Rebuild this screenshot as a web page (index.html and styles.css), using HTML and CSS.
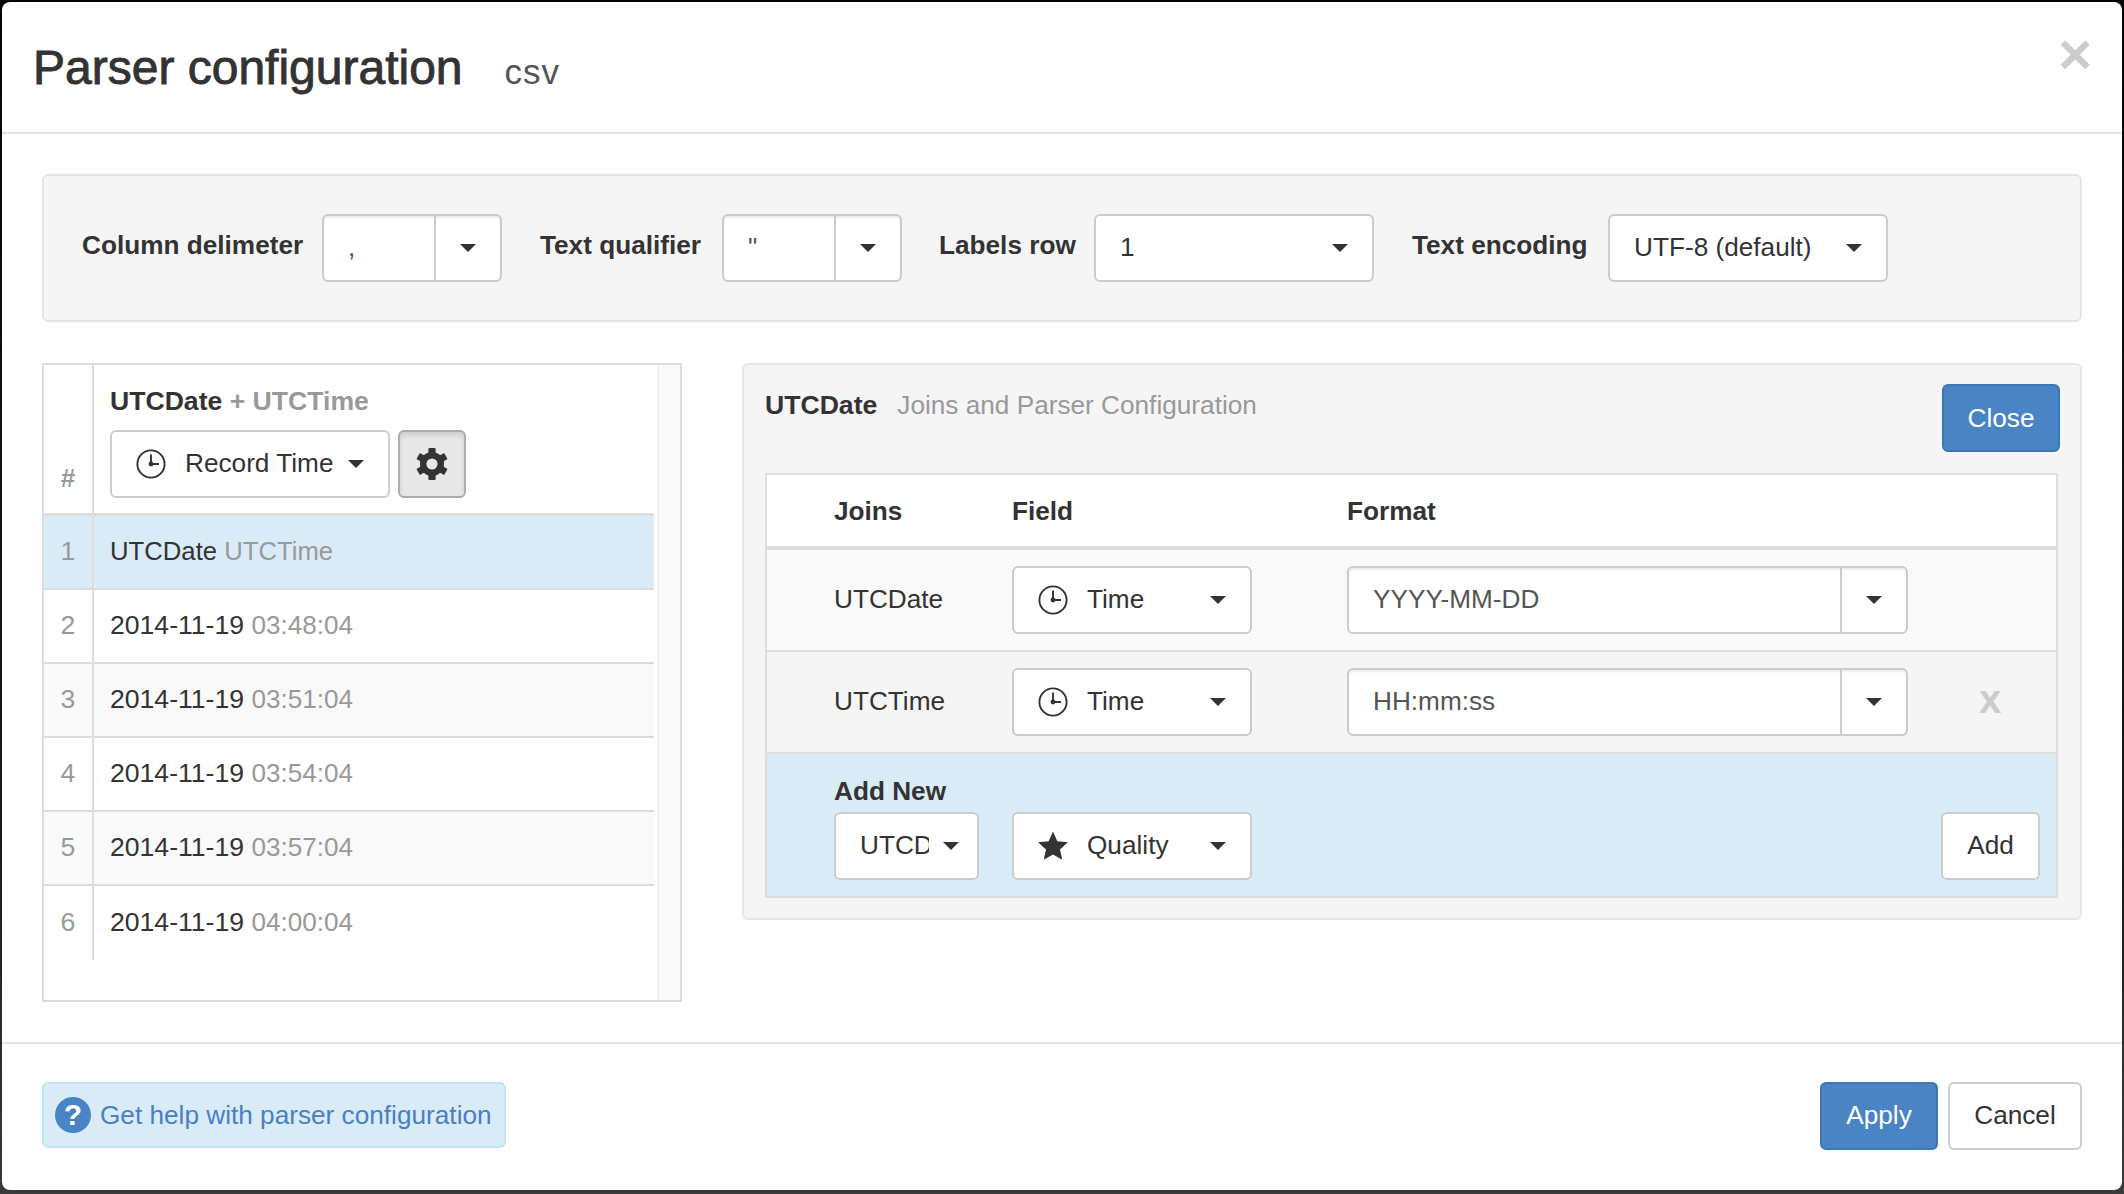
FILE: index.html
```html
<!DOCTYPE html>
<html lang="en">
  <head>
    <meta charset="UTF-8" />
    <title>Parser configuration</title>
    <link rel="stylesheet" href="styles.css">
  </head>
  <body>
    <svg class="defs" width="0" height="0">
      <symbol id="clock" viewBox="0 0 30 30">
        <circle cx="15" cy="15" r="13.6" fill="none" stroke="#333" stroke-width="1.9" />
        <path d="M15 5.5V15H23" fill="none" stroke="#333" stroke-width="1.9" />
        <circle cx="15" cy="15" r="2.4" fill="#333" />
      </symbol>
    </svg>

    <div class="modal">
      <div class="modal-head">
        <h3 class="modal-title">Parser configuration</h3>
        <span class="modal-sub">csv</span>
        <span class="close">&times;</span>
      </div>

      <div class="modal-body">
        <div class="well toolbar">
          <label class="tool-label w-delim">Column delimeter</label>
          <div class="combo w-combo">
            <span class="combo-text">,</span>
            <span class="combo-btn"><i class="caret"></i></span>
          </div>
          <label class="tool-label w-qual">Text qualifier</label>
          <div class="combo w-combo">
            <span class="combo-text">"</span>
            <span class="combo-btn"><i class="caret"></i></span>
          </div>
          <label class="tool-label w-row">Labels row</label>
          <div class="btn select w-select"><span>1</span><i class="caret"></i></div>
          <label class="tool-label w-enc">Text encoding</label>
          <div class="btn select w-select"><span>UTF-8 (default)</span><i class="caret"></i></div>
        </div>

        <div class="panels">
          <div class="preview">
            <table class="preview-table">
              <thead>
                <tr>
                  <th class="num">#</th>
                  <th class="preview-head">
                    <div class="preview-title">UTCDate <span class="muted">+ UTCTime</span></div>
                    <div class="preview-tools">
                      <div class="btn pick w-record">
                        <svg class="ico"><use href="#clock" /></svg>
                        <span>Record Time</span>
                        <i class="caret"></i>
                      </div>
                      <div class="btn gear-btn">
                        <svg class="gear" viewBox="-16 -16 32 32">
                          <g fill="#333">
                            <rect x="-3.6" y="-16" width="7.2" height="32" rx="1" />
                            <rect x="-3.6" y="-16" width="7.2" height="32" rx="1" transform="rotate(60)" />
                            <rect x="-3.6" y="-16" width="7.2" height="32" rx="1" transform="rotate(120)" />
                            <circle r="12" />
                          </g>
                          <circle r="5.6" fill="#e8e8e8" />
                        </svg>
                      </div>
                    </div>
                  </th>
                </tr>
              </thead>
              <tbody>
                <tr class="active"><td class="num">1</td><td class="names">UTCDate <span class="muted">UTCTime</span></td></tr>
                <tr><td class="num">2</td><td>2014-11-19 <span class="muted">03:48:04</span></td></tr>
                <tr class="odd"><td class="num">3</td><td>2014-11-19 <span class="muted">03:51:04</span></td></tr>
                <tr><td class="num">4</td><td>2014-11-19 <span class="muted">03:54:04</span></td></tr>
                <tr class="odd"><td class="num">5</td><td>2014-11-19 <span class="muted">03:57:04</span></td></tr>
                <tr class="last"><td class="num">6</td><td>2014-11-19 <span class="muted">04:00:04</span></td></tr>
              </tbody>
            </table>
            <div class="scroll-strip"></div>
          </div>

          <div class="well editor">
            <div class="editor-head">
              <div class="editor-title"><b>UTCDate</b><span class="muted">Joins and Parser Configuration</span></div>
              <div class="btn btn-primary w-close">Close</div>
            </div>
            <table class="joins">
              <colgroup>
                <col class="col-joins" />
                <col class="col-field" />
                <col class="col-format" />
                <col />
              </colgroup>
              <thead>
                <tr><th class="first">Joins</th><th>Field</th><th>Format</th><th></th></tr>
              </thead>
              <tbody>
                <tr class="odd">
                  <td class="first">UTCDate</td>
                  <td>
                    <div class="btn pick w-time">
                      <svg class="ico"><use href="#clock" /></svg>
                      <span>Time</span>
                      <i class="caret"></i>
                    </div>
                  </td>
                  <td>
                    <div class="combo w-format">
                      <span class="combo-text">YYYY-MM-DD</span>
                      <span class="combo-btn"><i class="caret"></i></span>
                    </div>
                  </td>
                  <td></td>
                </tr>
                <tr>
                  <td class="first">UTCTime</td>
                  <td>
                    <div class="btn pick w-time">
                      <svg class="ico"><use href="#clock" /></svg>
                      <span>Time</span>
                      <i class="caret"></i>
                    </div>
                  </td>
                  <td>
                    <div class="combo w-format">
                      <span class="combo-text">HH:mm:ss</span>
                      <span class="combo-btn"><i class="caret"></i></span>
                    </div>
                  </td>
                  <td><span class="remove">x</span></td>
                </tr>
                <tr class="add-new">
                  <td class="first">
                    <div class="add-label">Add New</div>
                    <div class="btn select w-utcd"><span class="clip">UTCD</span><i class="caret"></i></div>
                  </td>
                  <td>
                    <div class="btn pick w-time">
                      <svg class="ico" viewBox="0 0 30 30"><path d="M15 0.5l4.3 9.7 10.6 1.1-7.9 7.1 2.2 10.4-9.2-5.3-9.2 5.3 2.2-10.4-7.9-7.1 10.6-1.1z" fill="#333" /></svg>
                      <span>Quality</span>
                      <i class="caret"></i>
                    </div>
                  </td>
                  <td></td>
                  <td><div class="btn w-add">Add</div></td>
                </tr>
              </tbody>
            </table>
          </div>
        </div>
      </div>

      <div class="modal-foot">
        <a class="help"><span class="help-ico">?</span>Get help with parser configuration</a>
        <div class="foot-btns">
          <div class="btn btn-primary w-apply">Apply</div>
          <div class="btn w-cancel">Cancel</div>
        </div>
      </div>
    </div>
  </body>
</html>
```

FILE: styles.css
```css
* {
  box-sizing: border-box;
}

body {
  margin: 0;
  height: 1194px;
  overflow: hidden;
  background: linear-gradient(#050505, #1a1a1a 70%, #3a3a3a);
  color: #333;
  font-family: "Liberation Sans", Arial, sans-serif;
  font-size: 26.2px;
  line-height: 38px;
}

.defs {
  position: absolute;
}

.modal {
  position: relative;
  display: flex;
  flex-direction: column;
  margin: 2px 2px 0;
  height: 1188px;
  background: #fff;
  border-radius: 8px;
}

/* header */
.modal-head {
  display: flex;
  align-items: baseline;
  gap: 42px;
  height: 132px;
  padding: 42px 0 0 31px;
  border-bottom: 2px solid #e5e5e5;
}

.modal-title {
  margin: 0;
  font-size: 48px;
  font-weight: normal;
  line-height: 48px;
  -webkit-text-stroke: 0.9px #333;
}

.modal-sub {
  font-size: 35px;
  letter-spacing: 1px;
  line-height: 48px;
  color: #555;
}

.close {
  position: absolute;
  top: 23px;
  right: 30px;
  font-size: 58px;
  font-weight: bold;
  line-height: 58px;
  color: #ccc;
}

.modal-body {
  height: 908px;
  padding: 40px 40px 0;
}

/* shared bits */
.well {
  background: #f5f5f5;
  border: 2px solid #e6e6e6;
  border-radius: 6px;
}

.muted {
  color: #999;
}

.btn {
  display: flex;
  align-items: center;
  justify-content: center;
  height: 68px;
  background: #fff;
  border: 2px solid #ccc;
  border-radius: 6px;
  color: #333;
}

.btn > span {
  margin-bottom: 2px;
}

.btn-primary {
  background: #4a84c4;
  border-color: #3f77b6;
  color: #fff;
}

.caret {
  flex: none;
  width: 0;
  height: 0;
  border-top: 8px solid #333;
  border-left: 8px solid transparent;
  border-right: 8px solid transparent;
}

.combo {
  display: flex;
  flex: none;
  height: 68px;
  background: #fff;
  border: 2px solid #ccc;
  border-radius: 6px;
  color: #555;
  box-shadow: inset 0 2px 2px rgba(0, 0, 0, 0.07);
}

.combo-text {
  flex: 1;
  display: flex;
  align-items: center;
  padding: 0 0 2px 24px;
}

.combo-btn {
  display: flex;
  align-items: center;
  justify-content: center;
  border-left: 2px solid #ccc;
}

.select {
  flex: none;
  justify-content: space-between;
  padding: 0 24px;
}

.pick {
  justify-content: flex-start;
  padding: 0 24px;
}

.pick .ico {
  flex: none;
  width: 30px;
  height: 30px;
  margin-right: 19px;
}

.pick .caret {
  margin-left: auto;
}

/* toolbar */
.toolbar {
  display: flex;
  align-items: center;
  height: 148px;
  padding-left: 38px;
}

.tool-label {
  flex: none;
  margin-right: 19px;
  font-weight: bold;
  white-space: nowrap;
  position: relative;
  top: -3px;
}

.w-delim { width: 221px; }
.w-qual { width: 163px; margin-left: 38px; }
.w-row { width: 136px; margin-left: 37px; }
.w-enc { width: 177px; margin-left: 38px; }
.w-combo { width: 180px; }
.w-combo .combo-btn { width: 66px; }
.w-select { width: 280px; }
.w-record { width: 280px; }
.w-time { width: 240px; }
.w-format { width: 561px; }
.w-format .combo-btn { width: 66px; }
.w-utcd { width: 145px; padding: 0 18px 0 24px; }
.clip { width: 69px; overflow: hidden; }
.w-close { width: 118px; }
.w-add { width: 99px; margin-left: auto; padding-bottom: 2px; }
.w-apply { width: 118px; padding-bottom: 2px; }
.w-cancel { width: 134px; padding-bottom: 2px; }

.panels {
  display: flex;
  gap: 60px;
  margin-top: 41px;
}

/* left preview table */
.preview {
  display: flex;
  align-items: stretch;
  flex: none;
  width: 640px;
  height: 639px;
  border: 2px solid #ddd;
}

.preview-table {
  width: 610px;
  height: min-content;
  flex: none;
  border-collapse: separate;
  border-spacing: 0;
  table-layout: fixed;
}

.preview-table .num {
  width: 50px;
  padding: 0 0 2px;
  border-right: 2px solid #ddd;
  text-align: center;
  color: #999;
}

.preview-table th.num {
  vertical-align: bottom;
  padding-bottom: 16px;
}

.preview-table th {
  height: 151px;
  border-bottom: 3px solid #ddd;
  text-align: left;
}

.preview-head {
  padding: 0 0 15px 16px;
  vertical-align: bottom;
}

.preview-title {
  margin-bottom: 10px;
  font-size: 26.6px;
}

.preview-tools {
  display: flex;
  gap: 8px;
  font-weight: normal;
}

.gear-btn {
  width: 68px;
  background: #e8e8e8;
  border-color: #adadad;
  box-shadow: inset 0 3px 5px rgba(0, 0, 0, 0.125);
}

.gear {
  width: 32px;
  height: 32px;
}

.preview-table td {
  height: 74px;
  padding: 0 0 2px 16px;
  border-bottom: 2px solid #ddd;
  font-size: 26.6px;
}

.preview-table td .muted {
  font-size: 26.1px;
}

.preview-table .names,
.preview-table .names .muted {
  font-size: 25.7px;
}

.preview-table .last td {
  border-bottom: 0;
}

.preview-table .active td {
  background: #d9ebf7;
}

.odd td {
  background: #f9f9f9;
}

.scroll-strip {
  flex: 1;
  margin-left: 3px;
  background: #fafafa;
  border-left: 2px solid #f0f0f0;
}

/* right editor */
.editor {
  flex: none;
  width: 1340px;
  height: 557px;
  padding: 19px 20px 20px 21px;
}

.editor-head {
  display: flex;
  justify-content: space-between;
  height: 68px;
}

.editor-title {
  display: flex;
  gap: 20px;
  margin-top: 2px;
}

.editor-title b {
  font-size: 26.6px;
}

.joins {
  width: 1293px;
  margin-top: 21px;
  border: 2px solid #ddd;
  border-collapse: separate;
  border-spacing: 0;
  table-layout: fixed;
}

.col-joins { width: 245px; }
.col-field { width: 335px; }
.col-format { width: 561px; }

.joins th {
  height: 75px;
  padding: 0;
  background: #fff;
  border-bottom: 4px solid #ddd;
  text-align: left;
}

.joins td {
  height: 102px;
  padding: 0;
  border-bottom: 2px solid #ddd;
}

.joins .first {
  padding-left: 67px;
}

.joins tbody tr:not(.add-new) .first {
  padding-bottom: 2px;
}

.remove {
  display: block;
  margin: -6px 0 0 59px;
  width: 46px;
  text-align: center;
  font-size: 40px;
  font-weight: bold;
  color: #ccc;
}

.add-new td {
  height: 142px;
  border-bottom: 0;
  background: #d9ebf7;
  vertical-align: bottom;
  padding-bottom: 16px;
}

.add-new td:last-child {
  padding-right: 16px;
}

.add-label {
  font-weight: bold;
  margin-bottom: 2px;
}

/* footer */
.modal-foot {
  display: flex;
  justify-content: space-between;
  height: 146px;
  padding: 38px 40px 0;
  border-top: 2px solid #e5e5e5;
}

.help {
  display: flex;
  align-items: center;
  height: 66px;
  padding: 0 12px 0 11px;
  background: #d9ebf7;
  border: 2px solid #bce8f1;
  border-radius: 6px;
  color: #4a80c2;
}

.help-ico {
  width: 36px;
  height: 36px;
  margin-right: 9px;
  background: #4a84c4;
  border-radius: 50%;
  color: #fff;
  font-size: 30px;
  font-weight: bold;
  line-height: 36px;
  text-align: center;
}

.foot-btns {
  display: flex;
  gap: 10px;
}
```
